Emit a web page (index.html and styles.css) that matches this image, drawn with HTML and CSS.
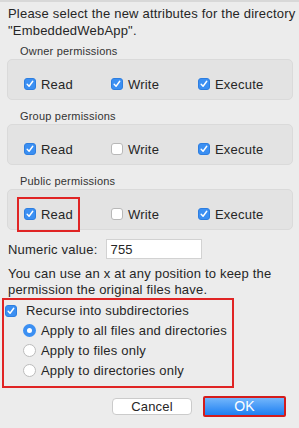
FILE: index.html
```html
<!DOCTYPE html>
<html lang="en">
<head>
  <meta charset="UTF-8" />
  <title>Change Permissions</title>
  <link rel="stylesheet" href="styles.css">
</head>
<body>
  <div class="dialog">
    <p class="intro">Please select the new attributes for the directory "EmbeddedWebApp".</p>

    <div class="group-label">Owner permissions</div>
    <div class="perm-box">
      <label class="perm"><span class="check on"></span>Read</label>
      <label class="perm"><span class="check on"></span>Write</label>
      <label class="perm"><span class="check on"></span>Execute</label>
    </div>

    <div class="group-label">Group permissions</div>
    <div class="perm-box">
      <label class="perm"><span class="check on"></span>Read</label>
      <label class="perm"><span class="check"></span>Write</label>
      <label class="perm"><span class="check on"></span>Execute</label>
    </div>

    <div class="group-label">Public permissions</div>
    <div class="perm-box">
      <label class="perm marked"><span class="check on"></span>Read</label>
      <label class="perm"><span class="check"></span>Write</label>
      <label class="perm"><span class="check on"></span>Execute</label>
    </div>

    <div class="numeric">
      <span>Numeric value:</span>
      <span class="num-input">755</span>
    </div>

    <p class="hint">You can use an x at any position to keep the permission the original files have.</p>

    <div class="recurse">
      <label class="option recurse-opt"><span class="check on"></span>Recurse into subdirectories</label>
      <div class="radios">
        <label class="option"><span class="radio on"></span>Apply to all files and directories</label>
        <label class="option"><span class="radio"></span>Apply to files only</label>
        <label class="option"><span class="radio"></span>Apply to directories only</label>
      </div>
    </div>

    <div class="buttons">
      <button class="btn">Cancel</button>
      <button class="btn primary">OK</button>
    </div>
  </div>
</body>
</html>
```

FILE: styles.css
```css
body {
  margin: 0;
  background: #ececec;
  font-family: "Liberation Sans", Arial, sans-serif;
  color: #262626;
  letter-spacing: 0.2px;
}

.dialog {
  border-top: 2px solid #d8d8d8;
  padding: 3px 6px 0 7px;
}

.intro {
  margin: 0 -6px -4px 0;
  padding-left: 1px;
  font-size: 13px;
  line-height: 17px;
}

.group-label {
  font-size: 11px;
  line-height: 12px;
  color: #333;
  margin: 10px 0 0 13px;
}

.perm-box {
  display: grid;
  grid-template-columns: 87px 87px 1fr;
  align-items: start;
  height: 41px;
  margin-top: 2px;
  padding: 18px 0 0 16px;
  background: #e3e3e3;
  border: 1px solid #dadada;
  border-radius: 5px;
  box-sizing: border-box;
}

.perm {
  position: relative;
  display: flex;
  align-items: center;
  gap: 5px;
  font-size: 13px;
  height: 12px;
}

/* red highlight drawn over the public "Read" box */
.perm.marked::before {
  content: "";
  position: absolute;
  left: -7px;
  top: -11px;
  width: 63px;
  height: 35px;
  border: 2px solid #e02424;
  box-sizing: border-box;
}

.check {
  width: 12px;
  height: 12px;
  border-radius: 3px;
  background: #fff;
  border: 1px solid #b8b8b8;
  box-sizing: border-box;
  flex-shrink: 0;
}

.check.on {
  border-color: #2d7ee0;
  background: #3b8ff2 url("data:image/svg+xml,%3Csvg xmlns='http://www.w3.org/2000/svg' viewBox='0 0 12 12'%3E%3Cpath d='M2.6 6.3 4.9 8.7 9.3 2.7' fill='none' stroke='%23fff' stroke-width='1.7' stroke-linecap='round' stroke-linejoin='round'/%3E%3C/svg%3E") center / 100% no-repeat;
}

.numeric {
  display: flex;
  align-items: center;
  gap: 8px;
  height: 20px;
  margin-top: 9px;
  padding-left: 1px;
  font-size: 13px;
}

.num-input {
  width: 96px;
  height: 20px;
  box-sizing: border-box;
  background: #fff;
  border: 1px solid #d2d2d2;
  padding: 1px 4px;
  line-height: 17px;
}

.hint {
  margin: 7px 0 0;
  padding-left: 1px;
  font-size: 13px;
  line-height: 16px;
}

.recurse {
  margin-left: -5px;
  width: 232px;
  height: 90px;
  border: 2px solid #e02424;
  box-sizing: border-box;
  padding: 2px 0 0 1px;
}

.option {
  display: flex;
  align-items: center;
  gap: 5px;
  font-size: 13px;
  height: 17px;
}

.recurse-opt {
  gap: 9px;
}

.radios {
  padding-left: 18px;
  margin-top: 3px;
  display: flex;
  flex-direction: column;
  gap: 3px;
}

.radio {
  width: 13px;
  height: 13px;
  border-radius: 50%;
  background: #fff;
  border: 1px solid #bcbcbc;
  box-sizing: border-box;
  flex-shrink: 0;
}

.radio.on {
  border: 4px solid #3b8ff2;
}

.buttons {
  display: flex;
  justify-content: flex-end;
  align-items: center;
  gap: 11px;
  height: 21px;
  margin-top: 8px;
  padding-right: 7px;
}

.btn {
  width: 80px;
  height: 17px;
  padding: 0;
  font-family: inherit;
  font-size: 13px;
  letter-spacing: 0.2px;
  line-height: 15px;
  background: #fff;
  border: 1px solid #cbcbcb;
  border-radius: 4px;
  color: #262626;
}

.btn.primary {
  width: 83px;
  height: 21px;
  color: #fff;
  font-size: 14px;
  background: linear-gradient(#73b6fb, #1d7ff2);
  border: 2px solid #d41c1c;
  border-radius: 2px;
}
```
